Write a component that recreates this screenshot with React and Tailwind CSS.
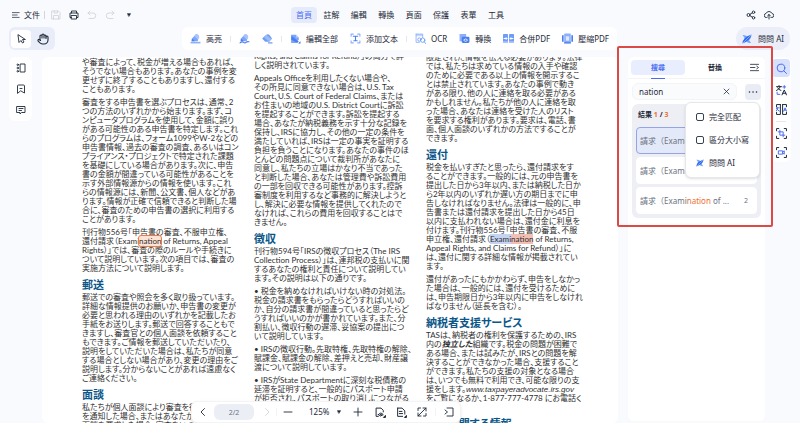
import { useState } from 'react'

const menu = ['首頁', '註解', '編輯', '轉換', '頁面', '保護', '表單', '工具']

const columns = [
  {
    offset: '',
    blocks: [
      ['や審査によって、税金が増える場合もあれば、', 'そうでない場合もあります。あなたの事例を変', '更せずに終了することもありますし、還付する', 'こともあります。'],
      [
        '審査をする申告書を選ぶプロセスは、通常、2',
        'つの方法のいずれかから始まります。まず、コ',
        'ンピュータプログラムを使用して、金額に誤り',
        'がある可能性のある申告書を特定します。これ',
        'らのプログラムは、フォーム1099やW-2などの',
        '申告書情報、過去の審査の調査、あるいはコン',
        'プライアンス・プロジェクトで特定された課題',
        'を基礎にしている場合があります。次に、申告',
        '書の金額が間違っている可能性があることを',
        '示す外部情報源からの情報を使います。これ',
        'らの情報源には、新聞、公文書、個人などがあ',
        'ります。情報が正確で信頼できると判断した場',
        '合に、審査のための申告書の選択に利用する',
        'ことがあります。',
      ],
      [
        '刊行物556号「申告書の審査、不服申立権、',
        <>還付請求（Exami<mark className="rounded-xs bg-[#fde3d5] text-inherit outline outline-[#ec7a45]">nation</mark> of Returns, Appeal</>,
        'Rights）」では、審査の際のルールや手続きに',
        'ついて説明しています。次の項目では、審査の',
        '実施方法について説明します。',
      ],
      { heading: '郵送' },
      [
        '郵送での審査や照会を多く取り扱っています。',
        '詳細な情報提供のお願いか、申告書の変更が',
        '必要と思われる理由のいずれかを記載したお',
        '手紙をお送りします。郵送で回答することもで',
        'きますし、審査官との個人面談を依頼すること',
        'もできます。ご情報を郵送していただいたり、',
        '説明をしていただいた場合は、私たちが同意',
        'する場合としない場合があり、変更の理由をご',
        '説明します。分からないことがあれば遠慮なく',
        'ご連絡ください。',
      ],
      { heading: '面談' },
      ['私たちが個人面談により審査を行うこと', 'を通知した場合、またはあなたが面談を', '面談を要求した場合、審査をいつどこで'],
    ],
  },
  {
    offset: '-mt-1.5',
    blocks: [
      ['Rights, and Claims for Refund）」の両方で詳', 'しく説明されています。'],
      [
        'Appeals Officeを利用したくない場合や、',
        'その所見に同意できない場合は、U.S. Tax',
        'Court、U.S. Court of Federal Claims、または',
        'お住まいの地域のU.S. District Courtに訴訟',
        'を提起することができます。訴訟を提起する',
        '場合、あなたが納税義務を示す十分な記録を',
        '保持し、IRSに協力し、その他の一定の条件を',
        '満たしていれば、IRSは一定の事実を証明する',
        '負担を負うことになります。あなたの事件のほ',
        'とんどの問題点について裁判所があなたに',
        '同意し、私たちの立場はかなり不当であった',
        'と判断した場合、あなたは管理費や訴訟費用',
        'の一部を回収できる可能性があります。控訴',
        '審制度を利用するなど事務的に解決しようと',
        'し、解決に必要な情報を提供してくれたので',
        'なければ、これらの費用を回収することはで',
        'きません。',
      ],
      { heading: '徴収' },
      ['刊行物594号「IRSの徴収プロセス（The IRS', 'Collection Process）」は、連邦税の支払いに関', 'するあなたの権利と責任について説明してい', 'ます。その説明は以下の通りです。'],
      [
        '• 税金を納めなければいけない時の対処法。',
        '税金の請求書をもらったらどうすればいいの',
        'か、自分の請求書が間違っていると思ったらど',
        'うすればいいのかが書かれています。また、分',
        '割払い、徴収行動の遅滞、妥協案の提出につ',
        'いて説明しています。',
      ],
      ['• IRSの徴収行動。先取特権、先取特権の解除、', '賦課金、賦課金の解除、差押えと売却、財産譲', '渡について説明しています。'],
      ['• IRSがState Departmentに深刻な税債務の', '延滞を証明すると、一般的にパスポート申請', 'が拒否され、パスポートの取り消しにつながる'],
    ],
  },
  {
    offset: '-mt-[5px]',
    blocks: [
      [
        '限定された情報を伝える必要があります。法律',
        'では、私たちは求めている情報の入手や確認',
        'のために必要である以上の情報を開示するこ',
        'とは禁止されています。あなたの事例で動き',
        'がある限り、他の人に連絡を取る必要がある',
        'かもしれません。私たちが他の人に連絡を取',
        'った場合、あなたは連絡を受けた人のリスト',
        'を要求する権利があります。要求は、電話、書',
        '面、個人面談のいずれかの方法ですることが',
        'できます。',
      ],
      { heading: '還付' },
      [
        '税金を払いすぎたと思ったら、還付請求をす',
        'ることができます。一般的には、元の申告書を',
        '提出した日から3年以内、または納税した日か',
        'ら2年以内のいずれか遅い方の期日までに申',
        '告しなければなりません。法律は一般的に、申',
        '告書または還付請求を提出した日から45日',
        '以内に支払われない場合は、還付金に利息を',
        '付けます。刊行物556号「申告書の審査、不服',
        <>申立権、還付請求（<span className="bg-[#c5d3f3]">Exami</span><mark className="bg-[#f3bfb4] text-inherit">nation</mark> of Returns,</>,
        'Appeal Rights, and Claims for Refund）」に',
        'は、還付に関する詳細な情報が掲載されてい',
        'ます。',
      ],
      ['還付があったにもかかわらず、申告をしなかっ', 'た場合は、一般的には、還付を受けるために', 'は、申告期限日から3年以内に申告をしなけれ', 'ばなりません（延長を含む）。'],
      { heading: '納税者支援サービス' },
      [
        'TASは、納税者の権利を保護するための、IRS',
        <>内の<b className="italic">独立した</b>組織です。税金の問題が困難で</>,
        'ある場合、または試みたが、IRSとの問題を解',
        '決することができなかった場合、支援すること',
        'ができます。私たちの支援の対象となる場合',
        'は、いつでも無料で利用でき、可能な限りの支',
        <>援をします。<i className="font-['Liberation_Sans',sans-serif]">www.taxpayeradvocate.irs.gov</i></>,
        'をご覧になるか、1-877-777-4778 にお電話く',
        'ださい。',
      ],
      { heading: '還付に関する情報' },
    ],
  },
]

function Icon({ className = 'size-2.5', children, box = 20, width = 1.8 }) {
  return (
    <svg viewBox={`0 0 ${box} ${box}`} className={`shrink-0 ${className}`} fill="none" stroke="currentColor" strokeWidth={width} strokeLinecap="round" strokeLinejoin="round" aria-hidden="true">
      {children}
    </svg>
  )
}

function MarkerIcon({ shape }) {
  return (
    <Icon className="size-[11px]" width="0">
      {shape === 'erase' ? (
        <>
          <path d="M1 9 8 3q3-2 6 1l3 4q2 2 0 4l-4 4H6l-4-4q-2-1-1-3z" fill="#6f9cf5" />
          <path d="m8 3 9 8-4 5-9-8z" fill="#9bbcfb" />
          <path d="M11 17h8v2h-8z" fill="#5b8bf0" />
        </>
      ) : (
        <>
          <path d="M3 11 11 2q3 0 5 5l-2 8H3z" fill="#7ba5f8" />
          <path d="m8 6 3-4q5 0 6 6l-3 4z" fill="#a9c5fc" />
          <path d="m4 10 5 5H3z" fill="#4a7ff0" />
          {shape === 'wave' ? (
            <path d="M2 18q3-3 6-1t5 0 5-1" stroke="#4a7ff0" strokeWidth="2" />
          ) : (
            <path d="M1 16h18v3H1z" fill="#8db0fa" />
          )}
        </>
      )}
    </Icon>
  )
}

function EditAllIcon() {
  return (
    <Icon className="size-[11px]" width="0">
      <path d="M2 3h9l5 5v4l-5 6H2z" fill="#7ba5f8" />
      <path d="m3 5 13 11-3 2L2 12z" fill="#4a7ff0" />
      <path d="M11 3l5 5h-5z" fill="#bcd2fd" />
      <path d="M19 15v4h-4z" fill="#2f5fe0" />
    </Icon>
  )
}

function AddTextIcon() {
  return (
    <Icon className="size-[11px] text-[#4a7ff0]" width="2">
      <path d="M2 6V2h4M14 2h4v4M2 14v4h4M14 18h4v-4" stroke="#8db0fa" />
      <path d="M6 6h8M10 6v8M7 14h6" />
    </Icon>
  )
}

function OcrIcon() {
  return (
    <Icon className="size-[11px] text-[#6f9cf5]" width="1.6">
      <path d="M2 2h12v4H2z" fill="#c4d7fd" stroke="none" />
      <path d="M2 2h12v6M2 2v15h6" stroke="#8db0fa" />
      <circle cx="8" cy="12" r="3" />
      <circle cx="14" cy="13" r="4" />
      <path d="m17 16 2 3" />
    </Icon>
  )
}

function ConvertIcon() {
  return (
    <Icon className="size-[11px]" width="0">
      <path d="M1 2h12v5l-7 8H1z" fill="#8db0fa" />
      <rect x="5" y="7" width="14" height="11" rx="2" fill="#4a7ff0" />
      <path d="M9 12q3-3 6 0M15 14q-3 3-6 0" stroke="#fff" strokeWidth="1.4" />
    </Icon>
  )
}

function MergeIcon() {
  return (
    <Icon className="size-[11px]" width="0">
      <rect x="0" y="2" width="9" height="16" rx="1" fill="#6f9cf5" />
      <rect x="11" y="2" width="9" height="16" rx="1" fill="#6f9cf5" />
      <path d="M2 10h5M13 10h5" stroke="#fff" strokeWidth="2" />
      <path d="m5 7 3 3-3 3zM15 7l-3 3 3 3z" fill="#fff" />
      <path d="M0 15h9v3H0zM11 15h9v3h-9z" fill="#a9c5fc" />
    </Icon>
  )
}

function CompressIcon() {
  return (
    <Icon className="size-[11px]" width="0">
      <path d="M0 4h3v12H0zM17 4h3v12h-3z" fill="#4a7ff0" />
      <rect x="4" y="1" width="12" height="18" rx="1" fill="#8db0fa" />
      <rect x="7" y="6" width="6" height="8" fill="#dfe9fe" />
      <path d="M4 16h12v3H4z" fill="#5b8bf0" />
    </Icon>
  )
}

function AiIcon({ className = 'size-2.5' }) {
  return (
    <Icon className={className} width="0">
      <path d="M1 2q8-1 11 5l7-6q-1 9-5 11l4 6q-8 0-10-4l-7 5q0-7 5-10z" fill="#7ba5f8" />
      <path d="M19 1Q9 4 5 9q-3 4-4 10 9-4 13-8 3-4 5-10z" fill="#2f6bef" />
      <path d="M19 1 1 19" stroke="#dbe7fe" strokeWidth="1" />
    </Icon>
  )
}

const toolGroups = [
  [{ label: '高亮', icon: <MarkerIcon /> }],
  [{ name: '波浪線', icon: <MarkerIcon shape="wave" /> }, { name: '擦除', icon: <MarkerIcon shape="erase" /> }],
  [{ label: '編輯全部', icon: <EditAllIcon /> }, { label: '添加文本', icon: <AddTextIcon /> }],
  [
    { label: 'OCR', icon: <OcrIcon /> },
    { label: '轉換', icon: <ConvertIcon /> },
    { label: '合併PDF', icon: <MergeIcon /> },
    { label: '壓縮PDF', icon: <CompressIcon /> },
  ],
]

function Header() {
  return (
    <header className="grid h-[27px] shrink-0 grid-cols-[1fr_auto_1fr] items-center px-3 pt-0.5 text-[8px] leading-3">
      <div className="flex items-center">
        <button className="flex items-center gap-1">
          <Icon className="size-2"><path d="M1 4h17M1 10h12M1 16h17" /></Icon>
          文件
        </button>
        <span className="mx-1 h-2 w-px bg-gray-300" />
        <div className="flex items-center gap-2 pl-0.5">
          <button aria-label="儲存" className="text-gray-300">
            <Icon><path d="M2 2h13l3 3v13H2zM6 2v4h7V2M5 18v-7h10v7" /></Icon>
          </button>
          <button aria-label="列印">
            <Icon><path d="M5 6V2h10v4M5 15H2V6h16v9h-3M5 11h10v7H5z" /></Icon>
          </button>
          <button aria-label="復原" className="text-gray-300">
            <Icon><path d="M6 2 2 6l4 4M2 6h10a5 5 0 0 1 0 11H4" /></Icon>
          </button>
          <button aria-label="重做" className="text-gray-300">
            <Icon><path d="m14 2 4 4-4 4M18 6H8a5 5 0 0 0 0 11h8" /></Icon>
          </button>
          <button aria-label="更多" className="pl-1">
            <Icon className="size-1"><path d="M1 3h18l-9 14z" fill="currentColor" /></Icon>
          </button>
        </div>
      </div>
      <nav className="flex w-[218px] justify-between">
        {menu.map((item, i) => (
          <a key={item} href="#" className={i === 0 ? 'rounded bg-[#e6ebfc] px-[5px] py-0.5 text-[#4a6cf0]' : 'px-[5px] py-0.5'}>
            {item}
          </a>
        ))}
      </nav>
      <div className="flex justify-end gap-2 pr-3.5">
        <button aria-label="分享">
          <Icon><circle cx="5" cy="10" r="3" /><circle cx="15" cy="4.500" r="2.500" /><circle cx="15" cy="15.500" r="2.500" /><path d="m8 8.500 5-3M8 11.500l5 3" /></Icon>
        </button>
        <button aria-label="上傳到雲端">
          <Icon><path d="M6 15H5a4 4 0 0 1-1-8 6.500 6.500 0 0 1 12 0 4 4 0 0 1-1 8h-1M10 18V9M7 12l3-3 3 3" /></Icon>
        </button>
      </div>
    </header>
  )
}

function Toolbar() {
  return (
    <div className="grid h-[30px] shrink-0 grid-cols-[1fr_auto_1fr] items-start pr-2.5 pl-[9px] text-[8px] leading-3">
      <div className="flex h-[23px] w-[46px] items-center justify-between rounded-md bg-[#e9ecf9] pr-1.5 pl-0.5">
        <button aria-label="選取" className="flex h-[18px] w-5 items-center justify-center rounded bg-white">
          <Icon><path d="m4 2 2 15 4-4 3 5 3-2-3-5h5z" /></Icon>
        </button>
        <button aria-label="手形工具">
          <Icon className="size-3" box="24" width="2.200">
            <path d="M18 11V6a2 2 0 0 0-4 0M14 10V4a2 2 0 0 0-4 0v2M10 10V6a2 2 0 0 0-4 0v8" />
            <path d="M18 8a2 2 0 1 1 4 0v6a8 8 0 0 1-8 8h-2c-3 0-4.500-1-6-2.300l-3.600-3.600a2 2 0 0 1 2.800-2.800L7 15" />
          </Icon>
        </button>
      </div>
      <div className="flex h-[23px] items-center rounded-md bg-white">
        {toolGroups.map((group, g) => (
          <div key={g} className="flex items-center">
            {g > 0 && <span className="h-1.5 w-px bg-gray-200" />}
            <div className="flex items-center gap-3 px-2">
              {group.map((tool) => (
                <button key={tool.label || tool.name} aria-label={tool.label || tool.name} className="flex items-center gap-[5px]">
                  {tool.icon}
                  {tool.label}
                </button>
              ))}
            </div>
          </div>
        ))}
      </div>
      <button className="flex h-[23px] items-center gap-1.5 justify-self-end rounded-full bg-[#ebeef8] px-1.5">
        <AiIcon />
        問問 AI
      </button>
    </div>
  )
}

function Sidebar() {
  return (
    <aside className="w-[42px] shrink-0 pl-[9px]">
      <div className="flex h-16 w-[23px] flex-col items-center justify-around rounded-md bg-white">
        <button aria-label="縮圖">
          <Icon><path d="M9 2h9v16H9z" /><circle cx="3.500" cy="3.500" r="1.500" /><circle cx="3.500" cy="10" r="1.500" /><circle cx="3.500" cy="16.500" r="1.500" /></Icon>
        </button>
        <button aria-label="書籤">
          <Icon><path d="M3 18V4q0-2 2-2h10q2 0 2 2v14l-7-4zM8 9h4" /></Icon>
        </button>
        <button aria-label="註解列表">
          <Icon><path d="M2 3h16v12h-7l-3 3v-3H2zM6 7h8M6 11h5" /></Icon>
        </button>
      </div>
    </aside>
  )
}

function Zoombar() {
  const [page, setPage] = useState('2/2')
  return (
    <div className="absolute bottom-0 left-[149px] flex h-[22px] items-center rounded-md border border-gray-100 bg-white px-1.5 text-[8px] leading-3 shadow-sm">
      <button aria-label="上一頁"><Icon><path d="m13 3-7 7 7 7" /></Icon></button>
      <input aria-label="頁碼" value={page} onChange={(e) => setPage(e.target.value)} className="ml-1.5 h-4 w-10 rounded-md bg-[#eceef5] text-center text-[7px] text-gray-500" />
      <button aria-label="下一頁" className="ml-2 text-gray-300"><Icon><path d="m7 3 7 7-7 7" /></Icon></button>
      <span className="mx-1 h-2 w-px bg-gray-100" />
      <button aria-label="縮小" className="ml-0.5"><Icon><path d="M2 10h16" /></Icon></button>
      <button className="ml-4 flex items-center gap-2">
        125%
        <Icon className="size-1"><path d="M1 3h18l-9 14z" fill="currentColor" /></Icon>
      </button>
      <button aria-label="放大" className="ml-3"><Icon><path d="M2 10h16M10 2v16" /></Icon></button>
      <div className="ml-3 flex items-center gap-2.5">
        <button aria-label="檢視模式">
          <Icon className="size-[11px]"><path d="M6 17H2V2h9l4 4v3" /><path d="M6 14q4-6 9 0-5 5-9 0z" /><circle cx="10.500" cy="14" r=".6" /><path d="M19 16v3h-3z" fill="currentColor" /></Icon>
        </button>
        <button aria-label="頁面模式">
          <Icon className="size-[11px]"><path d="M3 2h8l5 5v6M3 2v15h9M6 8h5M6 12h6" /><path d="M19 16v3h-3z" fill="currentColor" /></Icon>
        </button>
        <button aria-label="全螢幕">
          <Icon><path d="M12 2h6v6M18 2 2 18M2 12v6h6M2 7V2h5M18 13v5h-5" /></Icon>
        </button>
      </div>
      <span className="mx-2 h-2 w-px bg-gray-100" />
      <button aria-label="收合"><Icon><path d="M6 2h12v16H6M2 6l5 4-5 4" /></Icon></button>
    </div>
  )
}

function Document() {
  return (
    <main className="relative min-w-0 flex-1 overflow-hidden rounded-md bg-white">
      <article lang="ja" className="grid grid-cols-3 gap-x-3.5 pt-px pr-[34px] pl-10 font-['Lato','Noto_Sans_CJK_JP',sans-serif] text-[8px] leading-[9px] whitespace-nowrap text-[#303030] [font-feature-settings:'palt']">
        {columns.map((column, c) => (
          <section key={c} className={`flex min-w-0 flex-col ${column.offset}`}>
            {column.blocks.map((block, i) =>
              block.heading ? (
                <h2 key={i} className="mb-px text-[11px] leading-[15px] font-bold text-[#0b5688]">{block.heading}</h2>
              ) : (
                <p key={i} className="mb-1">
                  {block.map((line, l) => (
                    <span key={l} className="block">{line}</span>
                  ))}
                </p>
              )
            )}
          </section>
        ))}
      </article>
      <Zoombar />
    </main>
  )
}

function OptionsMenu() {
  return (
    <div className="absolute top-[45px] right-[5px] flex h-[76px] w-[75px] flex-col justify-around rounded-md border border-gray-200 bg-white py-0.5 pl-2.5 text-[8px] leading-3 shadow-sm">
      {['完全匹配', '區分大小寫'].map((label) => (
        <label key={label} className="flex items-center gap-[5px]">
          <input type="checkbox" className="size-2 appearance-none rounded-xs border border-gray-700" />
          {label}
        </label>
      ))}
      <button className="flex items-center gap-[5px]">
        <AiIcon className="size-2" />
        問問 AI
      </button>
    </div>
  )
}

function SearchPanel() {
  const [query, setQuery] = useState('nation')
  return (
    <section className="relative mb-0.5 w-[137px] shrink-0 rounded-md bg-white">
      <div className="flex h-[22px] items-start border-b border-gray-100 pt-[3px] pr-1.5 pl-[3px] text-[7px] leading-[15px] font-bold">
        <button className="flex w-[54px] flex-col items-center rounded">
          <span className="w-full rounded bg-[#e8eefd] text-[#4a6cf0]">搜尋</span>
          <span className="mt-[3px] h-px w-3.5 bg-[#4a6cf0]" />
        </button>
        <button className="w-[60px]">替換</button>
        <button aria-label="收合面板" className="ml-auto flex h-[15px] items-center">
          <Icon className="size-[9px]"><path d="M1 3h18M1 10h10M1 17h18M15 7l4 3-4 3" /></Icon>
        </button>
      </div>
      <div className="flex items-center justify-between px-1 pt-1">
        <div className="flex h-[17px] w-[105px] items-center rounded-md border border-gray-100 bg-[#fafbfd] px-1.5">
          <input aria-label="搜尋文字" value={query} onChange={(e) => setQuery(e.target.value)} className="w-full min-w-0 text-[8px] leading-3" />
          <button aria-label="清除"><Icon className="size-[7px]" width="2.200"><path d="m3 3 14 14M17 3 3 17" /></Icon></button>
        </div>
        <button aria-label="搜尋選項" className="flex h-4 w-4 items-center justify-center rounded bg-[#e9ecf4]">
          <Icon width="3"><path d="M3 10h.1M10 10h.1M17 10h.1" /></Icon>
        </button>
      </div>
      <div className="mx-1 mt-1 rounded-md bg-[#eeeff4] p-1 pt-1.5">
        <p className="pl-0.5 text-[7px] leading-[10px] font-bold">
          結果 <span className="text-[#f0702f]">1</span> / <span className="text-[#f0702f]">3</span>
        </p>
        <ul className="mt-[7px] flex flex-col gap-[3px] text-[8px] leading-3 text-gray-500">
          {[1, 2, 3].map((hit) => (
            <li key={hit} className={`flex h-[27px] items-center justify-between rounded border pr-2 pl-[3px] ${hit === 1 ? 'border-[#93a5e6] bg-[#e4e9f9]' : 'border-white bg-white'}`}>
              <span>請求（Exami<span className="text-[#f0702f]">nation</span> of ...</span>
              <span className="text-[7px]">2</span>
            </li>
          ))}
        </ul>
      </div>
      <OptionsMenu />
      <div className="pointer-events-none absolute -top-[11px] -left-[11px] h-[181px] w-[156px] rounded-xs border-2 border-[#dc4a45]" />
    </section>
  )
}

function RightTools() {
  return (
    <aside className="mr-[9px] ml-1.5 w-5 shrink-0">
      <div className="flex flex-col items-center gap-2 rounded-md bg-white pt-0.5 pb-1">
        <button aria-label="搜尋" className="flex size-[18px] items-center justify-center rounded bg-[#d7e1fb] text-[#4a6cf0]">
          <Icon className="size-[11px]"><circle cx="9" cy="9" r="7" /><path d="m14 14 5 5" /></Icon>
        </button>
        <button aria-label="翻譯">
          <Icon className="size-[11px]">
            <path d="M1 3h9M5.500 1v2M8 3q-2 5-7 7M3 5q2 4 6 5M11 18l4-9 4 9M12 15h6" />
            <path d="M15 1v5M12.500 3.500h5M2 13v4h5" stroke="#4a6cf0" />
          </Icon>
        </button>
        <button aria-label="對照翻譯">
          <Icon className="size-[11px]">
            <path d="M8 1H1v4M1 15v4h7V1M12 1h7v4M19 15v4h-7V1" />
            <path d="M0 7h6M3 7q0 4-3 6M1 8q2 4 5 5M14 13l2.500-6 2.500 6M15 11h3" stroke="#4a6cf0" />
          </Icon>
        </button>
        <span className="-my-0.5 h-px w-2.5 bg-gray-200" />
        <button aria-label="裁切">
          <Icon className="size-[11px]">
            <path d="M1 5V1h4M15 1h4v4M1 15v4h4M15 19h4v-4" />
            <path d="M7 4v9h9M4 7h9v9" stroke="#4a6cf0" />
          </Icon>
        </button>
        <button aria-label="錄影">
          <Icon className="size-[11px]">
            <path d="M1 5V1h4M15 1h4v4M1 15v4h4M15 19h4v-4" />
            <path d="M5 7h7v6H5zM12 9l3-2v6l-3-2" stroke="#4a6cf0" />
          </Icon>
        </button>
      </div>
    </aside>
  )
}

export default function App() {
  return (
    <div className="flex h-screen flex-col overflow-hidden bg-[#f8fafd] font-['Noto_Sans','Noto_Sans_CJK_TC',sans-serif] text-gray-800">
      <Header />
      <Toolbar />
      <div className="flex min-h-0 flex-1">
        <Sidebar />
        <Document />
        <div className="w-2.5 shrink-0" />
        <SearchPanel />
        <RightTools />
      </div>
    </div>
  )
}
